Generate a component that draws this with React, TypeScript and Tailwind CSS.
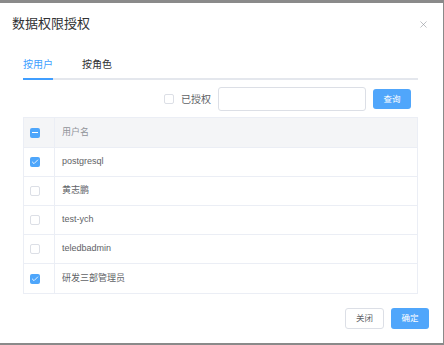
import { Check, X } from "lucide-react";

const rows = [
  { name: "postgresql", checked: true },
  { name: "黄志鹏", checked: false },
  { name: "test-ych", checked: false },
  { name: "teledbadmin", checked: false },
  { name: "研发三部管理员", checked: true },
];

function Box({ state }: { state: "on" | "off" | "half" }) {
  if (state === "off") {
    return <span className="block h-[10px] w-[10px] rounded-[2px] border border-[#dcdfe6] bg-white" />;
  }
  return (
    <span className="flex h-[10px] w-[10px] items-center justify-center rounded-[2px] bg-[#4ea6fb]">
      {state === "on" ? (
        <Check className="h-[8px] w-[8px] text-white" strokeWidth={2.5} />
      ) : (
        <span className="block h-[1.5px] w-[6px] bg-white" />
      )}
    </span>
  );
}

export default function App() {
  return (
    <div className="h-[345px] w-[444px] overflow-hidden border-t-[3px] border-r border-b-2 border-[#8a8a8a] bg-white font-['Liberation_Sans','Noto_Sans_CJK_SC',sans-serif]">
      <div className="flex h-[42px] items-center justify-between pl-[12px] pr-[14px]">
        <span className="text-[13px] text-[#303133]">数据权限授权</span>
        <X className="h-[11px] w-[11px] text-[#909399]" strokeWidth={1.3} />
      </div>

      <div className="ml-[23px] w-[395px]">
        <div className="mt-[5px] flex gap-[29px] border-b-2 border-[#e4e7ed]">
          <span className="-mb-[2px] flex h-[30px] items-center border-b-2 border-[#409eff] text-[10px] text-[#409eff]">
            按用户
          </span>
          <span className="flex h-[28px] items-center text-[10px] text-[#303133]">按角色</span>
        </div>

        <div className="mt-[7px] flex h-[24px] items-center justify-end gap-[7px] pr-[7px]">
          <Box state="off" />
          <span className="text-[10px] text-[#606266]">已授权</span>
          <div className="h-[24px] w-[148px] rounded-[3px] border border-[#dcdfe6] bg-white" />
          <button className="flex h-[20px] w-[38px] items-center justify-center rounded-[3px] bg-[#50a6fb] text-[8.5px] text-white">
            查询
          </button>
        </div>

        <div className="mt-[6px] border border-[#ebeef5]">
          <div className="flex h-[30px] border-b border-[#ebeef5] bg-[#f4f5f7]">
            <div className="flex w-[31px] items-center border-r border-[#ebeef5] pl-[6px]">
              <Box state="half" />
            </div>
            <div className="flex items-center pl-[7px] text-[9px] text-[#909399]">用户名</div>
          </div>
          {rows.map((r, i) => (
            <div
              key={r.name}
              className={`flex h-[29px] ${i < rows.length - 1 ? "border-b border-[#ebeef5]" : ""}`}
            >
              <div className="flex w-[31px] items-center border-r border-[#ebeef5] pl-[6px]">
                <Box state={r.checked ? "on" : "off"} />
              </div>
              <div className="flex items-center pl-[7px] text-[9px] text-[#606266]">{r.name}</div>
            </div>
          ))}
        </div>
      </div>

      <div className="mt-[14px] flex justify-end gap-[7px] pr-[14px]">
        <button className="flex h-[21px] w-[39px] items-center justify-center rounded-[3px] border border-[#dcdfe6] bg-white text-[8.5px] text-[#606266]">
          关闭
        </button>
        <button className="flex h-[21px] w-[38px] items-center justify-center rounded-[3px] bg-[#50a6fb] text-[8.5px] text-white">
          确定
        </button>
      </div>
    </div>
  );
}
